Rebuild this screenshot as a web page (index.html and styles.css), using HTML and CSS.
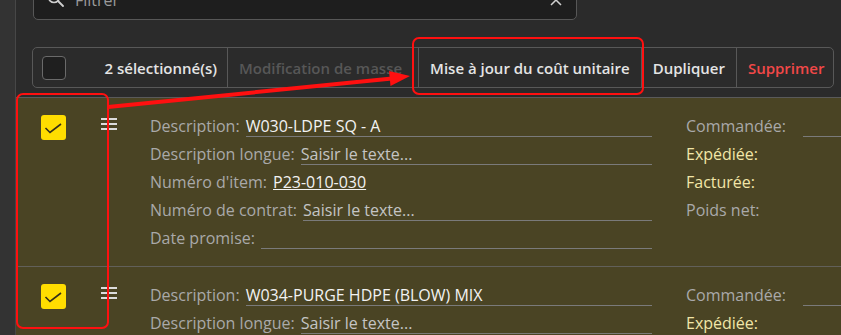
FILE: index.html
```html
<!DOCTYPE html>
<html lang="fr">
<head>
  <meta charset="UTF-8">
  <title>Lignes de commande</title>
  <link rel="stylesheet" href="styles.css">
</head>
<body>

  <div class="rail"></div>

  <div class="main">

    <div class="search">
      <svg class="search-icon" width="18" height="18" viewBox="0 0 18 18">
        <circle cx="7" cy="7" r="5.5" fill="none" stroke="#cfcfcf" stroke-width="1.6"/>
        <line x1="11" y1="11" x2="16" y2="16" stroke="#cfcfcf" stroke-width="1.8" stroke-linecap="round"/>
      </svg>
      <span class="search-text">Filtrer</span>
      <svg class="search-clear" width="12" height="12" viewBox="0 0 12 12">
        <path d="M1 1 L11 11 M11 1 L1 11" stroke="#d0d0d0" stroke-width="1.5"/>
      </svg>
    </div>

    <div class="toolbar">
      <div class="tb-sel">
        <span class="box"></span>
        <span class="tb-count">2 sélectionné(s)</span>
      </div>
      <div class="tb-btn disabled">Modification de masse</div>
      <div class="tb-btn">Mise à jour du coût unitaire</div>
      <div class="tb-btn">Dupliquer</div>
      <div class="tb-btn danger">Supprimer</div>
    </div>

    <div class="rows">

      <div class="row">
        <div class="check">
          <svg width="25" height="25" viewBox="0 0 25 25"><path d="M4.5 13 L9 17.5 L20 9" fill="none" stroke="#332e1a" stroke-width="1.6"/></svg>
        </div>
        <svg class="handle" width="18" height="14" viewBox="0 0 18 14">
          <path d="M1 2 H17 M1 7 H17 M1 12 H17" stroke="#dcdcdc" stroke-width="2"/>
        </svg>
        <div class="fields">
          <div class="field"><span class="lbl">Description:</span><span class="val">W030-LDPE SQ - A</span></div>
          <div class="field"><span class="lbl">Description longue:</span><span class="val ph">Saisir le texte...</span></div>
          <div class="field"><span class="lbl">Numéro d'item:</span><a class="link">P23-010-030</a></div>
          <div class="field"><span class="lbl">Numéro de contrat:</span><span class="val ph">Saisir le texte...</span></div>
          <div class="field"><span class="lbl">Date promise:</span><span class="val"></span></div>
        </div>
        <div class="qty">
          <div class="field"><span class="lbl qlbl">Commandée:</span><span class="val"></span></div>
          <div class="field"><span class="lbl hl">Expédiée:</span></div>
          <div class="field"><span class="lbl hl">Facturée:</span></div>
          <div class="field"><span class="lbl">Poids net:</span></div>
        </div>
      </div>

      <div class="row">
        <div class="check">
          <svg width="25" height="25" viewBox="0 0 25 25"><path d="M4.5 13 L9 17.5 L20 9" fill="none" stroke="#332e1a" stroke-width="1.6"/></svg>
        </div>
        <svg class="handle" width="18" height="14" viewBox="0 0 18 14">
          <path d="M1 2 H17 M1 7 H17 M1 12 H17" stroke="#dcdcdc" stroke-width="2"/>
        </svg>
        <div class="fields">
          <div class="field"><span class="lbl">Description:</span><span class="val">W034-PURGE HDPE (BLOW) MIX</span></div>
          <div class="field"><span class="lbl">Description longue:</span><span class="val ph">Saisir le texte...</span></div>
        </div>
        <div class="qty">
          <div class="field"><span class="lbl qlbl">Commandée:</span><span class="val"></span></div>
          <div class="field"><span class="lbl hl">Expédiée:</span></div>
        </div>
      </div>

    </div>
  </div>

  <!-- annotations drawn over the capture -->
  <svg class="marks" width="841" height="335" viewBox="0 0 841 335">
    <rect x="17" y="94" width="91" height="234" rx="6" fill="none" stroke="#ff1010" stroke-width="2"/>
    <rect x="413" y="38" width="230" height="56" rx="6" fill="none" stroke="#ff1010" stroke-width="2"/>
    <line x1="108" y1="107" x2="392" y2="78.5" stroke="#ff1010" stroke-width="4"/>
    <polygon points="410,76 390.5,86 389,71" fill="#ff1010"/>
  </svg>

</body>
</html>
```

FILE: styles.css
```css
body {
  margin: 0;
  height: 335px;
  overflow: hidden;
  display: flex;
  background-color: #2b2b2b;
  color: #f0f0f0;
  font-family: 'Open Sans', 'Noto Sans', sans-serif;
  font-size: 16px;
  position: relative;
}

.rail {
  width: 15px;
  flex-shrink: 0;
  background-color: #333333;
  border-right: 1px solid #474747;
}

.main {
  flex: 1;
  display: flex;
  flex-direction: column;
}

/* filter box, scrolled partly out of view */
.search {
  box-sizing: border-box;
  margin: -21px 0 0 17px;
  width: 544px;
  height: 41px;
  background-color: #1e1e1e;
  border: 1px solid #575757;
  border-radius: 5px;
  display: flex;
  align-items: center;
  padding: 0 12px 0 13px;
  flex-shrink: 0;
}

.search-icon {
  margin-top: -2px;
}

.search-text {
  margin-left: 10px;
  color: #9a9a9a;
  flex: 1;
}

.search-clear {
  margin-right: 2px;
}

/* bulk action bar */
.toolbar {
  box-sizing: border-box;
  margin: 27px 0 0 16px;
  width: 802px;
  height: 41px;
  flex-shrink: 0;
  display: flex;
  border: 1px solid #585858;
  border-radius: 5px;
  font-size: 15px;
  font-weight: 600;
  color: #e4e4e4;
}

.tb-sel {
  width: 194px;
  flex-shrink: 0;
  display: flex;
  align-items: center;
  padding: 0 10px 0 9px;
  box-sizing: border-box;
}

.box {
  width: 22px;
  height: 22px;
  border: 1px solid #6a6a6a;
  border-radius: 4px;
  background-color: #1f1f1f;
}

.tb-count {
  margin-left: auto;
}

.tb-btn {
  border-left: 1px solid #585858;
  display: flex;
  align-items: center;
  padding: 0 11px;
  white-space: nowrap;
}

.tb-btn.disabled {
  color: #575757;
  padding-right: 16px;
}

.tb-btn.danger {
  color: #f24848;
  flex: 1;
}

/* selected lines */
.rows {
  margin-top: 9px;
  border-top: 1px solid #5a5a5a;
}

.row {
  display: flex;
  align-items: flex-start;
  background-color: #4a4424;
  border-bottom: 1px solid #62605a;
  padding: 17px 0 10px 25px;
}

.check {
  width: 25px;
  height: 25px;
  border-radius: 3px;
  background-color: #ffdd00;
  flex-shrink: 0;
}

.check svg {
  display: block;
}

.handle {
  margin: 2px 0 0 34px;
  flex-shrink: 0;
}

.fields {
  margin: 1px 0 0 32px;
  width: 502px;
  flex-shrink: 0;
}

.qty {
  margin: 1px 0 0 34px;
  flex: 1;
}

.field {
  display: flex;
  height: 28px;
  line-height: 20px;
  white-space: nowrap;
}

.lbl {
  color: #a9a9a9;
  padding-right: 6px;
}

.lbl.hl {
  color: #f1e6a8;
}

.qlbl {
  width: 111px;
}

.val {
  flex: 1;
  height: 20px;
  border-bottom: 1px solid #7a7a7a;
  color: #f2f2f2;
}

.val.ph {
  color: #c4c4c4;
}

.link {
  color: #f2f2f2;
  text-decoration: underline;
}

.marks {
  position: absolute;
  left: 0;
  top: 0;
  pointer-events: none;
}
```
